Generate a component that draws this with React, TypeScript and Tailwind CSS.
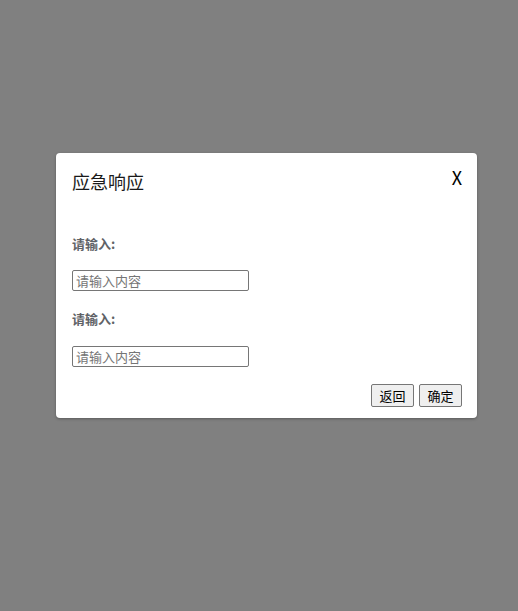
import React from "react";

const font = { fontFamily: '"Noto Sans CJK SC", "Noto Sans", sans-serif' };

function Field({ gap }: { gap: string }) {
  return (
    <div className="flex flex-col">
      <label className="text-[13px] leading-5 font-bold text-[#606266]">请输入:</label>
      <input
        placeholder="请输入内容"
        className={
          (gap === "a" ? "mt-4 " : "mt-[17px] ") +
          "w-[177px] h-[21px] border border-[#767676] rounded-[2px] px-[3px] text-[13px] leading-[19px] text-black placeholder:text-[#757575] outline-none"
        }
      />
    </div>
  );
}

export default function App() {
  return (
    <div className="min-h-screen w-full bg-[#808080] pt-[153px] pl-[56px]" style={font}>
      <div className="relative w-[421px] h-[265px] bg-white rounded-[4px] shadow-[0_1px_3px_rgba(0,0,0,0.3)] px-4 pt-4 flex flex-col">
        <div className="text-[18px] leading-6 text-[#1a1a1a]">应急响应</div>
        <button className="absolute right-[15px] top-[12px] text-[18px] leading-6 text-black">
          X
        </button>
        <div className="mt-[41px]">
          <Field gap="a" />
        </div>
        <div className="mt-[18px]">
          <Field gap="b" />
        </div>
        <div className="mt-[17px] flex justify-end gap-[5px] -mr-px">
          <button className="w-[43px] h-[23px] border border-[#767676] bg-[#efefef] rounded-[2px] text-[13px] leading-[21px] text-black">
            返回
          </button>
          <button className="w-[43px] h-[23px] border border-[#767676] bg-[#efefef] rounded-[2px] text-[13px] leading-[21px] text-black">
            确定
          </button>
        </div>
      </div>
    </div>
  );
}
